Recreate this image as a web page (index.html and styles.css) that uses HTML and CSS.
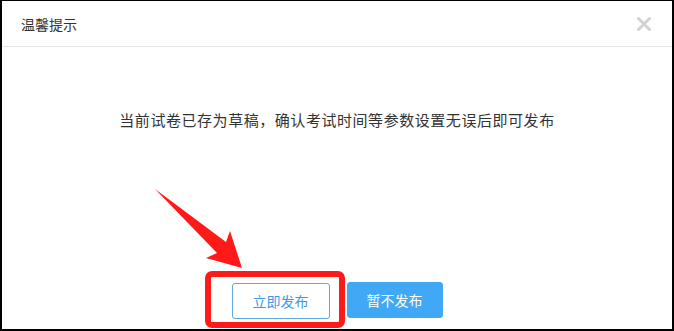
FILE: index.html
```html
<!DOCTYPE html>
<html lang="zh">
<head>
<meta charset="utf-8">
<title>温馨提示</title>
<link rel="stylesheet" href="styles.css">
</head>
<body>
<div class="dialog">
  <div class="header">
    <span class="title">温馨提示</span>
    <svg class="close" width="16" height="16" viewBox="0 0 16 16"><path d="M2.5 2.5 L13.5 13.5 M13.5 2.5 L2.5 13.5" stroke="#d2d2d2" stroke-width="3" stroke-linecap="round"/></svg>
  </div>
  <div class="content">
    <p class="message">当前试卷已存为草稿，确认考试时间等参数设置无误后即可发布</p>
  </div>
  <div class="footer">
    <button class="btn btn-outline">立即发布</button>
    <button class="btn btn-primary">暂不发布</button>
  </div>
  <svg class="annotation" width="674" height="331" viewBox="0 0 674 331">
    <polygon points="155,189 226,242 230,231 242,268 206,258 217,253" fill="#ff1a1a"/>
    <rect x="208" y="274" width="134" height="51" rx="4" ry="4" fill="none" stroke="#ff1a1a" stroke-width="6"/>
  </svg>
</div>
</body>
</html>
```
FILE: styles.css
```css
html, body {
  margin: 0;
  padding: 0;
  background: #ffffff;
}
body {
  width: 674px;
  height: 331px;
  overflow: hidden;
  font-family: "Noto Sans CJK SC", "Noto Sans", sans-serif;
}
.dialog {
  position: relative;
  box-sizing: border-box;
  width: 674px;
  height: 331px;
  border-style: solid;
  border-color: #000;
  border-width: 1px 2px 2px 2px;
  background: #fff;
  display: flex;
  flex-direction: column;
}
.header {
  height: 45px;
  border-bottom: 1px solid #e3e3e3;
  display: flex;
  align-items: center;
  justify-content: space-between;
  padding: 0 20px 0 19px;
}
.title {
  font-size: 14px;
  color: #333;
}
.close {
  display: block;
}
.content {
  padding-top: 63px;
  display: flex;
  justify-content: center;
}
.message {
  margin: 0;
  font-size: 15px;
  line-height: 20px;
  color: #333;
  letter-spacing: 0.55px;
}
.footer {
  margin-top: 152px;
  display: flex;
  justify-content: center;
  gap: 17px;
  padding-left: 0;
}
.btn {
  box-sizing: border-box;
  height: 36px;
  font-family: "Noto Sans CJK SC", "Noto Sans", sans-serif;
  font-size: 14px;
  border-radius: 3px;
  padding: 0;
  cursor: pointer;
}
.btn-outline {
  width: 98px;
  background: #fff;
  border: 1px solid #5fa9e6;
  color: #3d99e6;
  margin-top: 1px;
}
.btn-primary {
  width: 96px;
  background: #40a8f5;
  border: 1px solid #40a8f5;
  color: #fff;
}
.annotation {
  position: absolute;
  left: -2px;
  top: -1px;
  pointer-events: none;
}
```
